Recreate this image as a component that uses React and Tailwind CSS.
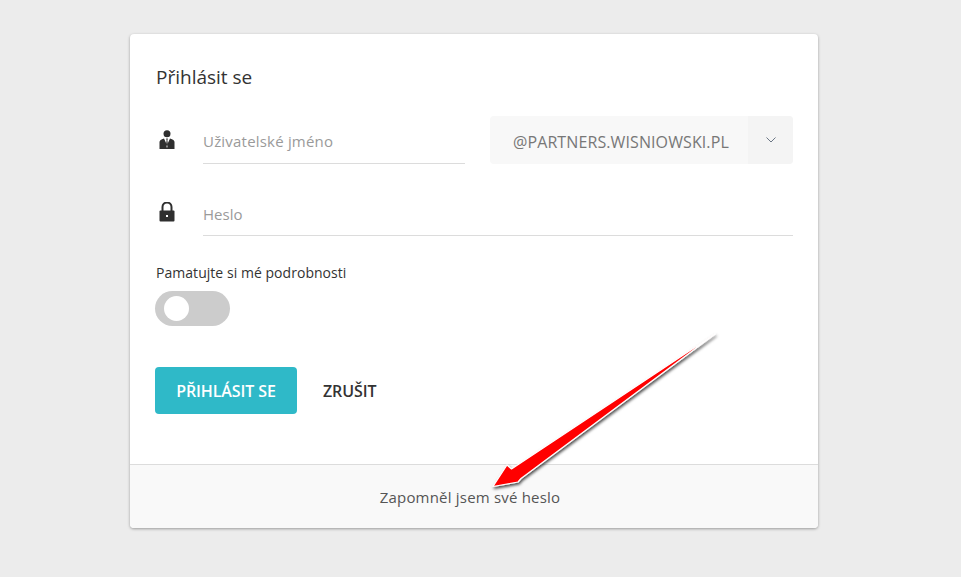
function UserIcon() {
  return (
    <svg width="16" height="20" viewBox="0 0 16 20" className="block">
      <circle cx="8" cy="3.8" r="3.5" fill="#2f2f2f" />
      <path d="M0.5 19V12C0.5 10.4 2 9.4 5 8.4L7.3 13.5L7 15.5L8 18L9 15.5L8.7 13.5L11 8.4C14 9.4 15.5 10.4 15.5 12V19Z" fill="#2f2f2f" />
      <path d="M7.2 8.6H8.8L8.4 10.4L9 15L8 17L7 15L7.6 10.4Z" fill="#2f2f2f" />
    </svg>
  );
}

function LockIcon() {
  return (
    <svg width="16" height="20" viewBox="0 0 16 20" className="block">
      <path d="M3.5 9V5a4.5 4.5 0 0 1 9 0v4" fill="none" stroke="#2f2f2f" strokeWidth="2" />
      <rect x="0.5" y="8.5" width="15" height="11" rx="1" fill="#2f2f2f" />
      <rect x="7" y="13" width="2" height="2" fill="#fff" />
    </svg>
  );
}

function Arrow() {
  return (
    <svg width="961" height="577" viewBox="0 0 961 577" className="absolute left-0 top-0 pointer-events-none">
      <defs>
        <filter id="arrowShadow" x="-20%" y="-20%" width="140%" height="140%">
          <feDropShadow dx="1" dy="2" stdDeviation="1.5" floodColor="#000" floodOpacity="0.7" />
        </filter>
      </defs>
      <path
        d="M715 334L511.5 469L507 465L493 486.5L518 482L521 478.5Z"
        fill="#ff0000"
        stroke="#fff"
        strokeWidth="1.2"
        strokeLinejoin="round"
        filter="url(#arrowShadow)"
      />
    </svg>
  );
}

export default function App() {
  return (
    <div className="relative min-h-[577px] bg-[#ececec] pt-[34px] font-['Open_Sans',sans-serif] overflow-hidden">
      <div className="ml-[130px] w-[688px] h-[494px] flex flex-col rounded bg-white shadow-[0_1px_3px_rgba(0,0,0,0.35)] overflow-hidden">
        <div className="flex-1 pl-[25px] pr-[25px]">
          <h1 className="mt-[29px] pl-px text-[19px] leading-[28px] text-[#333]">Přihlásit se</h1>

          <div className="mt-[25px] flex items-start">
            <div className="w-[48px] pt-[14px] pl-[4px]">
              <UserIcon />
            </div>
            <div className="w-[262px] h-[48px] pt-[4px] flex items-center border-b border-[#dcdcdc] text-[15px] tracking-[0.2px] text-[#9a9a9a]">
              Uživatelské jméno
            </div>
            <div className="ml-[25px] flex h-[48px] w-[303px] rounded overflow-hidden bg-[#f8f8f8]">
              <div className="flex-1 flex items-center pt-[4px] pl-[23px] text-[16px] tracking-[0.1px] text-[#777]">@PARTNERS.WISNIOWSKI.PL</div>
              <div className="w-[45px] flex items-center justify-center bg-[#f4f4f4]">
                <svg width="12" height="8" viewBox="0 0 12 8" fill="none" stroke="#6b7685" strokeWidth="1">
                  <path d="M1.5 1.5L6 6L10.5 1.5" />
                </svg>
              </div>
            </div>
          </div>

          <div className="mt-[24px] flex items-start">
            <div className="w-[48px] pt-[14px] pl-[4px]">
              <LockIcon />
            </div>
            <div className="flex-1 h-[48px] pt-[5px] flex items-center border-b border-[#dcdcdc] text-[15px] text-[#9a9a9a]">
              Heslo
            </div>
          </div>

          <div className="mt-[27px] pl-px text-[14px] leading-[20px] tracking-[0.04px] text-[#333]">Pamatujte si mé podrobnosti</div>
          <div className="mt-[8px] flex items-center w-[75px] h-[35px] rounded-full bg-[#cccccc] pl-[9px]">
            <div className="w-[25px] h-[25px] rounded-full bg-white" />
          </div>

          <div className="mt-[41px] flex items-center">
            <button className="w-[142px] h-[47px] pt-[1px] rounded bg-[#2fb9c8] text-[16px] tracking-[-0.1px] font-semibold text-white">PŘIHLÁSIT SE</button>
            <button className="ml-[26px] pt-[1px] text-[16px] tracking-[-0.1px] font-semibold text-[#333]">ZRUŠIT</button>
          </div>
        </div>
        <div className="h-[64px] pt-[2px] pr-[8px] flex items-center justify-center border-t border-[#dcdcdc] bg-[#f9f9f9] text-[15px] tracking-[0.2px] text-[#555]">
          Zapomněl jsem své heslo
        </div>
      </div>
      <Arrow />
    </div>
  );
}
